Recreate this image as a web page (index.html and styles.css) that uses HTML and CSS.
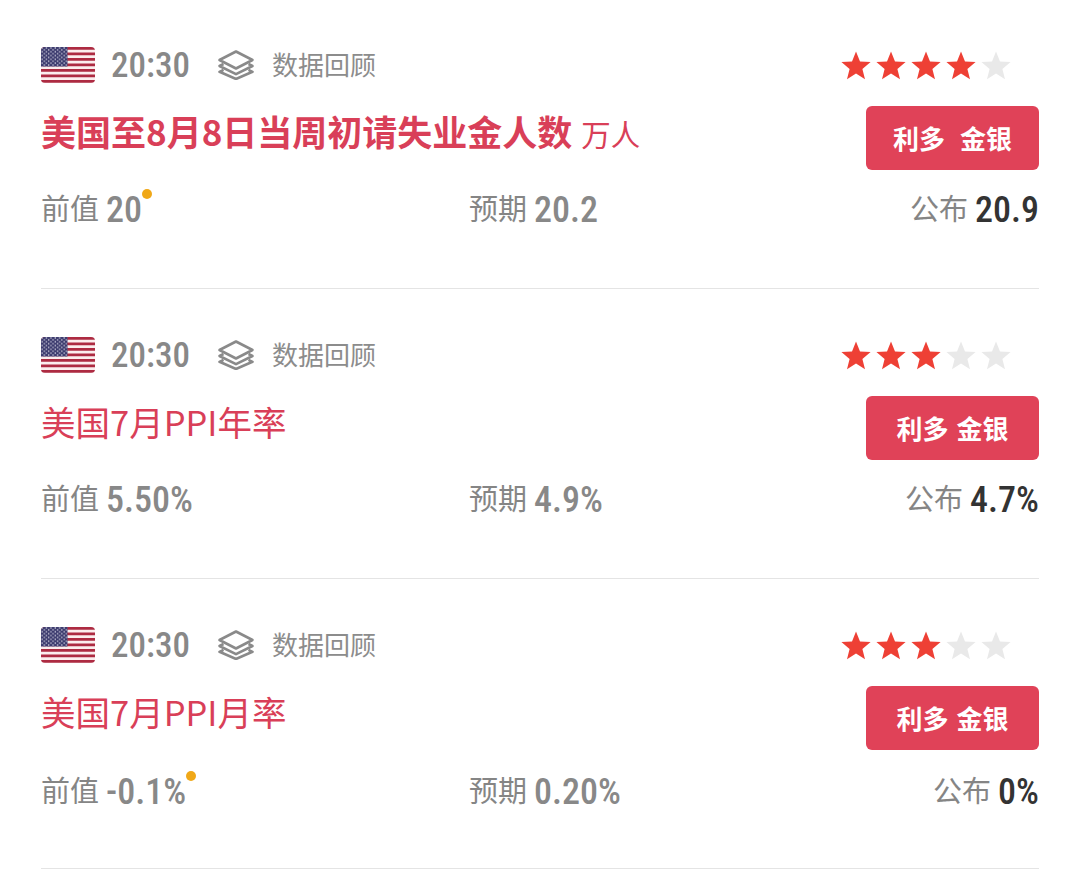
FILE: index.html
```html
<!DOCTYPE html>
<html lang="zh-CN">
<head>
    <meta charset="UTF-8">
    <meta name="viewport" content="width=device-width, initial-scale=1.0">
    <title>财经日历</title>
    <link rel="stylesheet" href="styles.css">
</head>
<body>
    <svg class="icon-defs" width="0" height="0" aria-hidden="true">
        <defs>
            <pattern id="canton-dots" width="4.4" height="3.8" patternUnits="userSpaceOnUse">
                <circle cx="1.1" cy="1" r="0.75" fill="#e9e9f2"/>
                <circle cx="3.3" cy="2.9" r="0.75" fill="#e9e9f2"/>
            </pattern>
            <clipPath id="flag-clip"><rect width="54" height="36" rx="4"/></clipPath>
            <symbol id="flag-us" viewBox="0 0 54 36">
                <g clip-path="url(#flag-clip)">
                    <rect width="54" height="36" fill="#fbeeee"/>
                    <path d="M0 1.4h54M0 6.9h54M0 12.4h54M0 17.9h54M0 23.4h54M0 28.9h54M0 34.4h54" stroke="#ad2b42" stroke-width="2.9"/>
                    <rect width="26.5" height="19.5" fill="#3c3b6e"/>
                    <rect width="26.5" height="19.5" fill="url(#canton-dots)"/>
                </g>
            </symbol>
            <symbol id="layers" viewBox="0 0 38 30">
                <path d="M19 1.5 35.5 10 19 18.5 2.5 10Z" fill="none" stroke="currentColor" stroke-width="2.6" stroke-linejoin="round"/>
                <path d="M6.5 14 2.5 16 19 24.2 35.5 16 31.5 14" fill="none" stroke="currentColor" stroke-width="2.6" stroke-linejoin="round"/>
                <path d="M6.5 19.8 2.5 21.8 19 29 35.5 21.8 31.5 19.8" fill="none" stroke="currentColor" stroke-width="2.6" stroke-linejoin="round"/>
            </symbol>
            <symbol id="star" viewBox="0 0 30 29">
                <path d="M15 0.5 19 10.4 29.6 11.1 21.4 17.9 24 28.3 15 22.6 6 28.3 8.6 17.9 0.4 11.1 11 10.4Z"/>
            </symbol>
        </defs>
    </svg>

    <div class="lista">
        <div class="evento">
            <div class="fila-top">
                <svg class="bandera"><use href="#flag-us"/></svg>
                <span class="hora">20:30</span>
                <svg class="capas"><use href="#layers"/></svg>
                <span class="revision">数据回顾</span>
                <div class="estrellas">
                    <svg class="estrella on"><use href="#star"/></svg>
                    <svg class="estrella on"><use href="#star"/></svg>
                    <svg class="estrella on"><use href="#star"/></svg>
                    <svg class="estrella on"><use href="#star"/></svg>
                    <svg class="estrella"><use href="#star"/></svg>
                </div>
            </div>
            <div class="fila-titulo">
                <div class="titulo fuerte">美国至8月8日当周初请失业金人数<span class="unidad">万人</span></div>
                <div class="boton ancho">利多 金银</div>
            </div>
            <div class="fila-valores">
                <div class="dato"><span class="etiqueta">前值</span><span class="numero con-punto">20</span></div>
                <div class="dato"><span class="etiqueta">预期</span><span class="numero">20.2</span></div>
                <div class="dato final"><span class="etiqueta">公布</span><span class="numero oscuro">20.9</span></div>
            </div>
        </div>

        <div class="evento">
            <div class="fila-top">
                <svg class="bandera"><use href="#flag-us"/></svg>
                <span class="hora">20:30</span>
                <svg class="capas"><use href="#layers"/></svg>
                <span class="revision">数据回顾</span>
                <div class="estrellas">
                    <svg class="estrella on"><use href="#star"/></svg>
                    <svg class="estrella on"><use href="#star"/></svg>
                    <svg class="estrella on"><use href="#star"/></svg>
                    <svg class="estrella"><use href="#star"/></svg>
                    <svg class="estrella"><use href="#star"/></svg>
                </div>
            </div>
            <div class="fila-titulo">
                <div class="titulo">美国7月PPI年率</div>
                <div class="boton">利多 金银</div>
            </div>
            <div class="fila-valores">
                <div class="dato"><span class="etiqueta">前值</span><span class="numero">5.50%</span></div>
                <div class="dato"><span class="etiqueta">预期</span><span class="numero">4.9%</span></div>
                <div class="dato final"><span class="etiqueta">公布</span><span class="numero oscuro">4.7%</span></div>
            </div>
        </div>

        <div class="evento">
            <div class="fila-top">
                <svg class="bandera"><use href="#flag-us"/></svg>
                <span class="hora">20:30</span>
                <svg class="capas"><use href="#layers"/></svg>
                <span class="revision">数据回顾</span>
                <div class="estrellas">
                    <svg class="estrella on"><use href="#star"/></svg>
                    <svg class="estrella on"><use href="#star"/></svg>
                    <svg class="estrella on"><use href="#star"/></svg>
                    <svg class="estrella"><use href="#star"/></svg>
                    <svg class="estrella"><use href="#star"/></svg>
                </div>
            </div>
            <div class="fila-titulo">
                <div class="titulo">美国7月PPI月率</div>
                <div class="boton">利多 金银</div>
            </div>
            <div class="fila-valores bajo">
                <div class="dato"><span class="etiqueta">前值</span><span class="numero con-punto">-0.1%</span></div>
                <div class="dato"><span class="etiqueta">预期</span><span class="numero">0.20%</span></div>
                <div class="dato final"><span class="etiqueta">公布</span><span class="numero oscuro">0%</span></div>
            </div>
        </div>
    </div>
</body>
</html>
```

FILE: styles.css
```css
body {
    margin: 0;
    background: #fff;
    font-family: "Noto Sans CJK SC", "Liberation Sans", sans-serif;
}

.icon-defs {
    position: absolute;
}

.lista {
    padding: 0 41px;
}

.evento {
    box-sizing: border-box;
    height: 290px;
    padding-top: 48px;
    border-bottom: 1px solid #e4e4e4;
}

.evento:first-child {
    height: 289px;
    padding-top: 47px;
}

/* fila de bandera, hora y estrellas */
.fila-top {
    display: flex;
    align-items: center;
    height: 36px;
}

.bandera {
    width: 54px;
    height: 36px;
}

.hora {
    margin-left: 16px;
    width: 74px;
    font-family: "Roboto", sans-serif;
    font-stretch: 75%;
    font-size: 35px;
    font-weight: 500;
    color: #888;
}

.capas {
    margin-left: 32px;
    width: 38px;
    height: 30px;
    color: #8a8a8a;
}

.revision {
    margin-left: 17px;
    padding-bottom: 4px;
    font-size: 26px;
    color: #8c8c8c;
}

.estrellas {
    display: flex;
    gap: 5px;
    margin-left: auto;
    margin-right: 28px;
}

.estrella {
    width: 30px;
    height: 29px;
    fill: #e9e9e9;
}

.estrella.on {
    fill: #ee4035;
}

/* fila del titulo */
.fila-titulo {
    display: flex;
    justify-content: space-between;
    margin-top: 23px;
}

.titulo {
    font-size: 34.5px;
    line-height: 50px;
    color: #d93f58;
}

.titulo.fuerte {
    font-size: 35px;
    font-weight: 700;
}

.unidad {
    margin-left: 9px;
    font-size: 29.5px;
    font-weight: 400;
}

.boton {
    width: 173px;
    height: 64px;
    border-radius: 6px;
    background: #e04258;
    color: #fff;
    font-size: 26px;
    font-weight: 700;
    line-height: 64px;
    text-align: center;
    word-spacing: 2px;
}

.boton.ancho {
    word-spacing: 9px;
}

/* fila de valores */
.fila-valores {
    display: grid;
    grid-template-columns: 428px 1fr auto;
    margin-top: 16px;
}

.fila-valores.bajo {
    padding-top: 2px;
}

.dato {
    display: flex;
    align-items: flex-start;
    gap: 7px;
}

.dato.final {
    justify-content: flex-end;
}

.etiqueta {
    font-size: 29px;
    line-height: 42px;
    color: #858585;
}

.numero {
    position: relative;
    margin-top: 3px;
    font-family: "Roboto", sans-serif;
    font-stretch: 75%;
    font-size: 36px;
    font-weight: 500;
    line-height: 42px;
    color: #888;
}

.numero.oscuro {
    color: #333;
}

.con-punto::after {
    content: "";
    position: absolute;
    top: 0;
    right: -10px;
    width: 10px;
    height: 10px;
    border-radius: 50%;
    background: #f0a818;
}
```
